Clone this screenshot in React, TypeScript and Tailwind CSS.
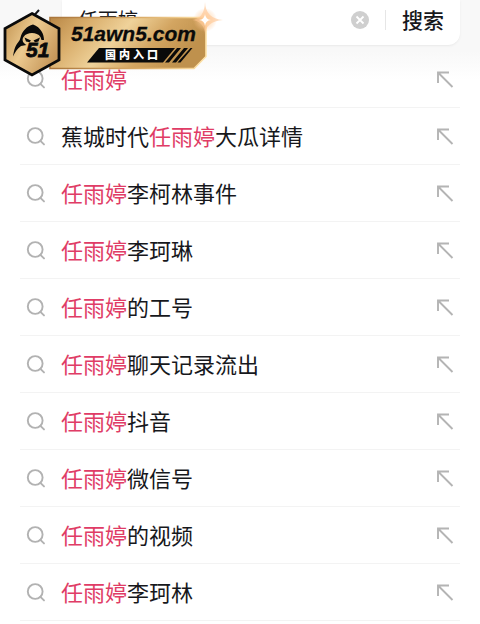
import { useState } from 'react';

const KEYWORD = '任雨婷';

const suggestions = [
  '任雨婷',
  '蕉城时代任雨婷大瓜详情',
  '任雨婷李柯林事件',
  '任雨婷李珂琳',
  '任雨婷的工号',
  '任雨婷聊天记录流出',
  '任雨婷抖音',
  '任雨婷微信号',
  '任雨婷的视频',
  '任雨婷李珂林',
];

function SearchIcon() {
  return (
    <svg viewBox="0 0 20 20" className="w-5 h-5 shrink-0" fill="none" stroke="#b2b2b2" strokeWidth="1.9" strokeLinecap="round">
      <circle cx="9.2" cy="9.5" r="7.4" />
      <path d="M14.4 14.8 18 18.4" />
    </svg>
  );
}

function FillIcon() {
  return (
    <svg viewBox="0 0 18 18" className="w-[18px] h-[18px]" fill="none" stroke="#b4b4b4" strokeWidth="1.9">
      <path d="M13 2.5H2V13M2 2.500l14.500 14.500" />
    </svg>
  );
}

function Highlight({ text }: { text: string }) {
  const [before, after] = text.split(KEYWORD);
  return (
    <span>
      {before}
      <span className="text-[#e03c66]">{KEYWORD}</span>
      {after}
    </span>
  );
}

function SiteBadge() {
  return (
    <svg viewBox="0 0 230 80" className="absolute left-0 top-0 w-[230px] h-20 pointer-events-none" aria-hidden="true">
      <defs>
        <linearGradient id="gold" x1="0" y1="0" x2="1" y2="0.3">
          <stop offset="0" stopColor="#b98746" />
          <stop offset="0.25" stopColor="#d9ae6c" />
          <stop offset="0.5" stopColor="#efd29a" />
          <stop offset="0.75" stopColor="#d3a561" />
          <stop offset="1" stopColor="#bf914d" />
        </linearGradient>
        <linearGradient id="hex" x1="0" y1="0" x2="1" y2="0.6">
          <stop offset="0" stopColor="#c0914e" />
          <stop offset="0.5" stopColor="#ecca90" />
          <stop offset="1" stopColor="#c6975a" />
        </linearGradient>
        <linearGradient id="edge" x1="0" y1="0" x2="1" y2="0">
          <stop offset="0" stopColor="#a8743a" />
          <stop offset="0.6" stopColor="#dcae6a" />
          <stop offset="1" stopColor="#ffe3a8" />
        </linearGradient>
        <radialGradient id="glow">
          <stop offset="0" stopColor="#fff" />
          <stop offset="0.25" stopColor="#ffd9a6" stopOpacity="0.75" />
          <stop offset="1" stopColor="#ffc08a" stopOpacity="0" />
        </radialGradient>
      </defs>

      {/* plate */}
      <path d="M50 17.500H203q3 0 3 3V56.500L194 68.500H50z" fill="url(#gold)" stroke="url(#edge)" strokeWidth="1.600" />
      <path d="M99 48h76L163 62.500H87z" fill="#0a0a0a" />
      <path d="M177 48h4L169 62.500h-4zM184 48h4L176 62.500h-4zM190.500 48h2L180.500 62.500h-3z" fill="#0a0a0a" />
      <text x="71" y="41" fontSize="21" fontWeight="700" fontStyle="italic" fill="#0a0a0a" stroke="#0a0a0a" strokeWidth="0.3" className="font-['Liberation_Sans',sans-serif]">
        51awn5.com
      </text>
      <text y="59" fontSize="11" fontWeight="900" fill="#fff" className="font-['Noto_Sans_CJK_SC',sans-serif]">
        <tspan x="105">国</tspan>
        <tspan x="119">内</tspan>
        <tspan x="133">入</tspan>
        <tspan x="147">口</tspan>
      </text>

      {/* hexagon emblem */}
      <path d="M32 13.500 59 28.500V60L32 75 5 60V28.500z" fill="url(#hex)" stroke="#0a0a0a" strokeWidth="2.800" />
      <path
        d="M33 24.500C27 26 22 31 20.500 37.500 20 41 17 43 15.500 46.500 14 50 13.500 53 13 56.500c2-4.500 4-7.500 8-10.500l5.500-1C23 43 21.500 40 23.500 37c2-3 5-4 8.500-4s6.500 1 8.500 4l1 3h2.500c0-6-3-12.500-11-15.500z"
        fill="#0a0a0a"
      />
      <path d="M24.500 37.500l6.500 3-1.500 1.800-3.500-.8zM40 37.500l-6.500 3 1.500 1.800 3.500-.8z" fill="#0a0a0a" />
      <text x="26" y="57" fontSize="21" fontWeight="700" fontStyle="italic" fill="#0a0a0a" stroke="#0a0a0a" strokeWidth="0.8" className="font-['Liberation_Sans',sans-serif]">
        51
      </text>

      {/* sparkle */}
      <circle cx="205" cy="20" r="12" fill="url(#glow)" />
      <path d="M205 2q.5 16.500 18 18-17.500 1.500-18 15-.5-13.500-13-15 12.500-1.500 13-18z" fill="#ffc591" fillOpacity="0.6" />
      <path d="M205 14q.5 5.500 6 6-5.500.5-6 6-.5-5.500-6-6 5.500-.5 6-6z" fill="#fff" />
    </svg>
  );
}

export default function App() {
  const [query, setQuery] = useState(KEYWORD);

  return (
    <div className="relative min-h-screen bg-white text-[#17181c] font-['Noto_Sans_CJK_SC',sans-serif]">
      <header className="flex items-start h-[51px] pr-5 bg-[#f8f8f8]">
        <button type="button" aria-label="返回" className="w-[62px] h-10 pl-7 shrink-0">
          <svg viewBox="0 0 12 22" className="w-3 h-[22px]" fill="none" stroke="#17181c" strokeWidth="2">
            <path d="M11 1 2 11l9 10" />
          </svg>
        </button>
        <form
          className="flex flex-1 min-w-0 items-center h-[45px] pl-4 pr-4 pb-1.5 bg-white rounded-b-xl shadow-sm shadow-black/5"
          onSubmit={(e) => e.preventDefault()}
        >
          <input
            aria-label="搜索内容"
            value={query}
            onChange={(e) => setQuery(e.target.value)}
            className="flex-1 min-w-0 text-xl outline-none"
          />
          <button type="button" aria-label="清除" onClick={() => setQuery('')} className="shrink-0">
            <svg viewBox="0 0 18 18" className="w-[18px] h-[18px]">
              <circle cx="9" cy="9" r="9" fill="#cfcfcf" />
              <path d="m5.500 5.500 7 7m0-7-7 7" stroke="#fff" strokeWidth="1.800" />
            </svg>
          </button>
          <span className="w-px h-5 mx-4 bg-[#e6e6e6]" />
          <button type="submit" className="shrink-0 text-[21px] font-medium">
            搜索
          </button>
        </form>
      </header>

      <ul className="px-5 bg-linear-to-b from-[#f8f8f8] to-white to-5%">
        {suggestions.map((text) => (
          <li key={text} className="border-b border-[#f3f3f3]">
            <button type="button" onClick={() => setQuery(text)} className="flex w-full items-center px-1.5 py-[11px] text-left text-[22px] leading-8">
              <SearchIcon />
              <span className="flex-1 pl-[15px] pb-0.5">
                <Highlight text={text} />
              </span>
              <FillIcon />
            </button>
          </li>
        ))}
      </ul>

      <SiteBadge />
    </div>
  );
}
